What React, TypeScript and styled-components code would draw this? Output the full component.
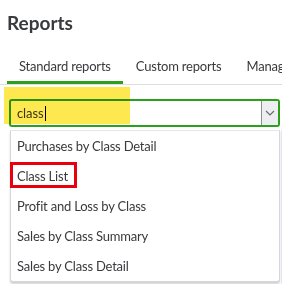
import React from 'react';
import styled, { createGlobalStyle } from 'styled-components';

const GlobalStyle = createGlobalStyle`
  html, body {
    margin: 0;
    padding: 0;
    background: #ffffff;
  }
  body {
    font-family: Lato, "Open Sans", Arial, sans-serif;
    color: #393a3d;
  }
`;

const Page = styled.div`
  position: relative;
  width: 282px;
  height: 284px;
  overflow: hidden;
`;

const Title = styled.h1`
  margin: 0;
  padding: 12px 0 0 7px;
  font-size: 19px;
  font-weight: 700;
  line-height: 22px;
  color: #393a3d;
`;

const TabBar = styled.div`
  display: flex;
  margin-top: 24px;
  padding-left: 7px;
  border-bottom: 1px solid #dcdee2;
  white-space: nowrap;
`;

const Tab = styled.div<{ $active?: boolean }>`
  flex: none;
  margin-right: 1px;
  padding: 0 12px 7px;
  font-size: 13px;
  letter-spacing: -0.2px;
  line-height: 16px;
  color: #393a3d;
  border-bottom: 3px solid ${(p) => (p.$active ? '#2ca01c' : 'transparent')};
`;

const SearchArea = styled.div`
  position: relative;
  padding: 14px 2px 0 9px;
`;

const Highlight = styled.div`
  position: absolute;
  left: 4px;
  top: 2px;
  width: 126px;
  height: 37px;
  background: #fde84f;
  mix-blend-mode: multiply;
  pointer-events: none;
  z-index: 3;
`;

const Combo = styled.div`
  display: flex;
  height: 28px;
  box-sizing: border-box;
  border: 2px solid #2ca01c;
  border-radius: 3px;
  overflow: hidden;
`;

const Input = styled.div`
  flex: 1;
  display: flex;
  align-items: center;
  padding-left: 6px;
  font-size: 13px;
  letter-spacing: -0.1px;
  color: #393a3d;
`;

const Caret = styled.span`
  display: inline-block;
  width: 1px;
  height: 15px;
  margin-left: 1px;
  background: #000;
`;

const ChevronBox = styled.div`
  width: 16px;
  display: flex;
  align-items: center;
  justify-content: center;
  background: #eceef1;
  border-left: 1px solid #8d9096;
`;

const Menu = styled.ul`
  list-style: none;
  margin: 3px 0 0 1px;
  padding: 0;
  width: 268px;
  background: #fff;
  border: 1px solid #d4d7dc;
  border-top-color: #e3e5e8;
  border-radius: 0 0 3px 3px;
  box-shadow: 0 2px 2px rgba(0, 0, 0, 0.18);
  position: relative;
  z-index: 2;
`;

const Item = styled.li`
  height: 30px;
  display: flex;
  align-items: center;
  padding-left: 6px;
  font-size: 13px;
  letter-spacing: -0.2px;
  color: #393a3d;
  white-space: nowrap;
`;

const Marked = styled.div`
  position: absolute;
  left: 10px;
  top: 162px;
  width: 67px;
  height: 26px;
  box-sizing: border-box;
  border: 3px solid #e8000d;
  z-index: 4;
  pointer-events: none;
`;

const BackRule = styled.div`
  position: absolute;
  left: 281px;
  top: 130px;
  width: 1px;
  height: 154px;
  background: #e6e7ea;
`;

const items = [
  'Purchases by Class Detail',
  'Class List',
  'Profit and Loss by Class',
  'Sales by Class Summary',
  'Sales by Class Detail',
];

export default function App() {
  return (
    <Page>
      <GlobalStyle />
      <Title>Reports</Title>
      <TabBar>
        <Tab $active>Standard reports</Tab>
        <Tab>Custom reports</Tab>
        <Tab>Management reports</Tab>
      </TabBar>
      <SearchArea>
        <Highlight />
        <Combo>
          <Input>
            class
            <Caret />
          </Input>
          <ChevronBox>
            <svg width="10" height="6" viewBox="0 0 10 6">
              <path d="M1 1l4 4 4-4" fill="none" stroke="#6b6c72" strokeWidth="1.2" />
            </svg>
          </ChevronBox>
        </Combo>
        <Menu>
          {items.map((label) => (
            <Item key={label}>{label}</Item>
          ))}
        </Menu>
      </SearchArea>
      <BackRule />
      <Marked />
    </Page>
  );
}
